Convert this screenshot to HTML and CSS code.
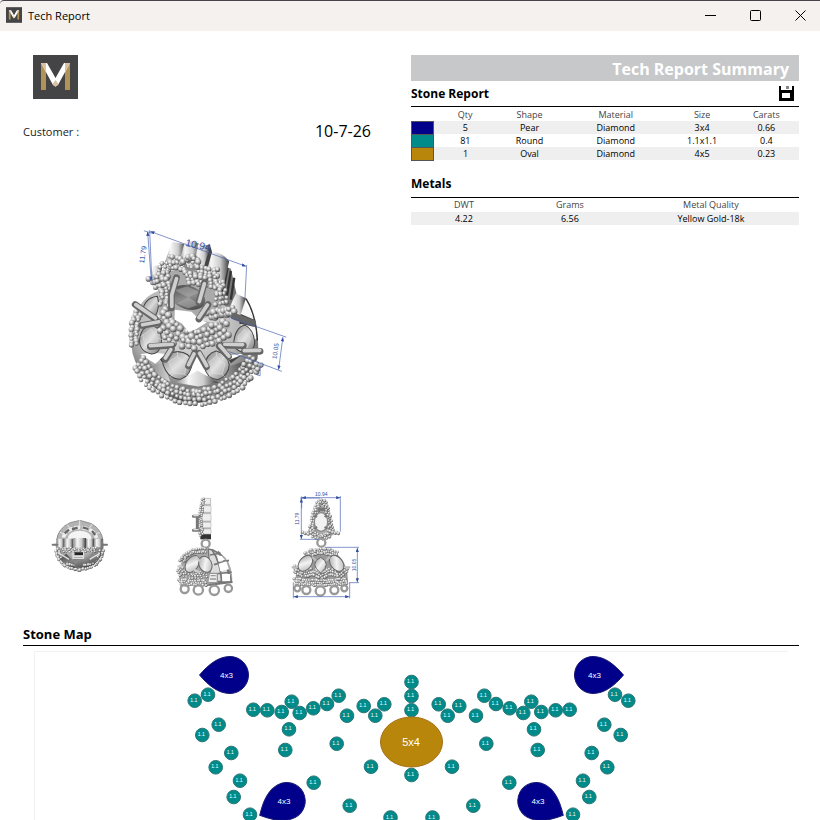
FILE: index.html
```html
<!DOCTYPE html>
<html lang="en">
<head>
<meta charset="utf-8">
<title>Tech Report</title>
<link rel="stylesheet" href="styles.css">
</head>
<body>
<svg class="defs" width="0" height="0" aria-hidden="true">
  <defs>
    <radialGradient id="bead" cx=".38" cy=".32" r=".7"><stop offset="0" stop-color="#fff"/><stop offset=".4" stop-color="#c8c8c8"/><stop offset="1" stop-color="#444"/></radialGradient>
    <radialGradient id="dome" cx=".45" cy=".3" r=".7"><stop offset="0" stop-color="#eee"/><stop offset=".6" stop-color="#b4b4b4"/><stop offset="1" stop-color="#4a4a4a"/></radialGradient>
    <linearGradient id="tube"><stop offset="0" stop-color="#8a8a8a"/><stop offset=".3" stop-color="#f6f6f6"/><stop offset=".65" stop-color="#cdcdcd"/><stop offset="1" stop-color="#3c3c3c"/></linearGradient>
    <linearGradient id="gem" x1="0" y1="0" x2="1" y2="1"><stop offset="0" stop-color="#7c7c7c"/><stop offset=".5" stop-color="#dadada"/><stop offset="1" stop-color="#777"/></linearGradient>
    <linearGradient id="softgem" x1="0" y1="0" x2="1" y2="1"><stop offset="0" stop-color="#999"/><stop offset=".5" stop-color="#f4f4f4"/><stop offset="1" stop-color="#aaa"/></linearGradient>
    <linearGradient id="darkgem" x1="0" y1="0" x2="1" y2="1"><stop offset="0" stop-color="#3d3d3d"/><stop offset=".5" stop-color="#8b8b8b"/><stop offset="1" stop-color="#333"/></linearGradient>
    <marker id="arrow" viewBox="0 0 10 8" refX="10" refY="4" markerWidth="14" markerHeight="10" markerUnits="userSpaceOnUse" orient="auto-start-reverse"><path d="M0 0L10 4L0 8Z" fill="#2f4da3"/></marker>
    <symbol id="logo" viewBox="0 0 45 44">
      <rect width="45" height="44" fill="#444446"/>
      <path d="M8 9h5v26H8zM32 9h5v26h-5z" fill="#b29354"/>
      <path d="M8 8h6l8.500 15L31 8h6L25 30q-2.500 2-5 0Z" fill="#fff"/>
      <path d="M8 8h5v9ZM37 8h-5v9ZM22.500 25l3 4-3 3-3-3Z" fill="#d8c1a5"/>
    </symbol>
  </defs>
</svg>

<header class="titlebar">
  <svg class="titlebar-logo" aria-hidden="true"><use href="#logo"/></svg>
  <span class="titlebar-name">Tech Report</span>
  <button class="window-button" aria-label="Minimize"><svg width="11" height="11"><path d="M0 5.500h11"/></svg></button>
  <button class="window-button" aria-label="Maximize"><svg width="11" height="11"><rect x=".5" y=".5" width="10" height="10" rx="1"/></svg></button>
  <button class="window-button" aria-label="Close"><svg width="11" height="11"><path d="M.5 .5l10 10M10.500 .5l-10 10"/></svg></button>
</header>

<main class="report">
  <div class="columns">
    <section class="overview">
      <svg class="brand" role="img" aria-label="M"><use href="#logo"/></svg>
      <div class="customer"><span>Customer :</span><time class="date">10-7-26</time></div>

      <svg class="render-main" viewBox="0 0 570 600" role="img" aria-label="Perspective view">
        <path d="M85 265q-30 60-18 135 25 90 110 130 75 35 150 2 80-35 112-115 10-70-20-135-30-55-65-72H160q-50 10-75 55Z" fill="url(#dome)"/>
        <path d="M385 235q50 45 52 120l-28 20-35-110Z" fill="#f6f6f6"/>
        <path d="M405 237q30 48 34 125" fill="none" stroke="#333" stroke-width="4"/>
        <path d="M388 282l42 18 5 22-50-10ZM140 405l60-8-45 30ZM345 405l55-5-40 30Z" fill="#444"/>
        <path d="M90 403q45-8 75 0l-30 28ZM350 405l55-5-50 20ZM215 455l48-60 35 72-60 2Z" fill="#fff"/>
        <path d="M110 415l45 60 70 30 80-5 75-35 25-50-15 80-60 42h-110l-85-45Z" fill="#8d8d8d"/>
        <path d="M120 440q18-12 38-10l22 55q-35-12-60-45ZM352 440l58-20q-20 45-65 60Z" fill="url(#tube)"/>
        <path d="M195 487l66-35 62 35-60 12Z" fill="url(#tube)"/>
        <g class="beads" data-path="84,275 72,320 72,380" data-count="24" data-spread="7" data-size="8"></g>
        <g class="beads" data-path="85,425 115,475 165,510 215,528 262,533 320,522 375,488 415,450 435,415" data-count="130" data-spread="20" data-size="8"></g>
        <g class="gem">
          <path d="M97 280q2-45 44-50 10 30-8 65Z"/>
          <path d="M88 360q5-40 34-44 34 8 31 54-5 32-30 32-36-8-35-42Z"/>
          <path d="M368 375q3-52 34-59 25 12 29 50 0 25-26 33-26-3-37-24Z"/>
          <path d="M157 430q5-30 45-35 35 2 43 30-3 40-34 52-39 1-54-47Z"/>
          <path d="M281 440q5-40 35-47 33 8 39 40 0 31-34 46-33-4-40-39Z"/>
        </g>
        <path class="facets" d="M98 345l25-18 21 28-9 30-31-3ZM381 350l20-22 18 29-12 28-24-4ZM174 425l27-17 30 22-9 32-34-2ZM294 427l23-19 26 23-9 31-31-2ZM98 345l-9 8M144 355l10 4M201 408v-13M188 460l-8 10M222 462l8 7M317 408v-13M303 460l-8 10M334 462l7 8"/>
        <path d="M338 140l22 8 18 80 26 10-30 45-45-35Z" fill="#777"/>
        <path d="M350 145l-15 80M360 155l-12 75M370 175l-10 65" stroke="#333" stroke-width="7"/>
        <path d="M375 222l30 14-18 55-40-8Z" fill="url(#tube)"/>
        <g fill="url(#tube)">
          <path d="M185 68l40 7-15 70-49-10Z"/><path d="M222 70q30-10 47 8l-14 72-51-12Z"/><path d="M262 75l36 3-20 82-31-8Z"/><path d="M300 98q35 0 55 28l-15 64-62-25Z"/><path d="M130 140l25-3-5 62-30-12Z"/>
        </g>
        <path d="M278 150l20-72 6 20-14 50Z" fill="#444"/>
        <path d="M150 160l80-15 90 25 15 110-75 20 100 20-70 60-100-15-45-50Z" fill="#aaa"/>
        <g class="beads" data-path="148,282 170,325 210,355 260,362 310,345 352,320" data-count="62" data-spread="24" data-size="10"></g>
        <path d="M193 270l50 6 20 20 25 12-32 20-22 8-20-25-22-12Z" fill="#fff"/>
        <ellipse cx="232" cy="234" rx="53" ry="35" fill="url(#darkgem)" transform="rotate(18 232 234)"/>
        <path d="M192 212l38-12 38 18-35 15ZM233 233l-35 18 35 15 35-12Z" fill="#bbb" opacity=".45"/>
        <g class="beads" data-path="122,193 152,182 172,125 205,133 240,145 265,158 325,168" data-count="65" data-spread="14" data-size="8"></g>
        <g class="beads" data-path="158,160 155,185 170,215 165,262" data-count="34" data-spread="14" data-size="8"></g>
        <g class="beads" data-path="225,175 270,180 320,190 333,220 330,260" data-count="48" data-spread="15" data-size="8"></g>
        <g class="beads" data-path="295,288 375,270" data-count="18" data-spread="8" data-size="10"></g>
        <circle cx="243" cy="130" r="21" fill="none" stroke="#888" stroke-width="8"/>
        <g class="beads" data-path="222,130 230,115 250,112 264,130 255,147" data-count="9" data-spread="2" data-size="9"></g>
        <g class="prongs">
          <path d="M198 175L183 225V265M281 190L265 248M292 255L265 298M75 255L135 297M95 317L145 308M120 380L185 376M183 388L165 418M252 400L234 438M265 400L287 440M325 378L353 410M342 376L397 377M400 395L447 394M370 290L425 310"/>
        </g>
        <g class="prong-light"><path d="M198 178L184 226V260M281 193L266 246M290 256L265 293M77 255L135 295M97 315L145 306M120 377L185 373M181 389L165 414M250 402L234 434M267 400L288 437M327 377L354 408M342 373L395 374M400 392L446 391"/></g>
        <g class="dimension">
          <path class="arrows" d="M120 37L405 141"/><path class="arrows" d="M112 38L123 184"/><path class="arrows" d="M515 352L502 449"/>
          <path d="M101 35L127 43M118 33L125 190M407 137L402 236M355 292L525 352M355 395L512 454M447 430V467L435 463"/>
          <text x="262" y="88" font-size="30" transform="rotate(12 262 80)">10.94</text>
          <text x="98" y="113" font-size="21" transform="rotate(-82 98 106)">11.79</text>
          <text x="492" y="400" font-size="19" transform="rotate(-82 492 393)">10.05</text>
        </g>
      </svg>

      <div class="views">
        <svg viewBox="-21 24 348 342" role="img" aria-label="Top view">
          <circle cx="149" cy="195" r="72" fill="url(#dome)"/>
          <path d="M80 180q4-35 40-52l30-7 35 10q30 18 34 50" fill="#b4b4b4" stroke="#777" stroke-width="2"/>
          <path d="M100 173q6-28 49-31 42 3 51 32" fill="none" stroke="#eee" stroke-width="11" stroke-dasharray="18 5"/>
          <path d="M104 160l13-11M126 148l17-5M158 142l17 5M186 153l10 12" stroke="#666" stroke-width="7"/>
          <path d="M149 121v18M112 134l9 13M186 133l-9 13M90 157l12 5M209 157l-12 5" stroke="#e8e8e8" stroke-width="3"/>
          <ellipse cx="149" cy="174" rx="35" ry="22" fill="#f4f4f4"/>
          <path d="M81 176h22v25H83z" fill="url(#tube)"/><path d="M103 176h27v28h-27z" fill="url(#tube)"/><path d="M130 174h38v31h-38z" fill="url(#tube)"/><path d="M168 176h24v28h-24z" fill="url(#tube)"/><path d="M192 176h26l-4 26h-22z" fill="url(#tube)"/>
          <path d="M68 194h14M216 194h15" stroke="#777" stroke-width="6" stroke-linecap="round"/>
          <g class="beads" data-path="80,210 90,235 110,256 149,265 190,256 210,233 217,208" data-count="60" data-spread="5" data-size="5"></g>
          <g class="beads" data-path="95,210 202,210" data-count="34" data-spread="5" data-size="4"></g>
          <path d="M89 238l20-17 17 18-20 12ZM130 236h31l-5 26h-22ZM168 239l19-19 20 16-18 13Z" fill="url(#darkgem)"/>
          <path d="M88 220l29 18M209 220l-30 18M129 213v22h31v-22M127 229h36" stroke="#ddd" stroke-width="4" fill="none"/>
          <path d="M134 217h25v8h-25z" fill="#222"/><circle cx="149" cy="270" r="6" fill="url(#bead)"/>
        </svg>
        <svg viewBox="327 24 348 342" role="img" aria-label="Side view">
          <path d="M513 55h30v117l-30 5Z" fill="#aaa"/><path d="M520 55h22v18h-22zM517 77h26v20h-26zM514 101h29v22h-29zM518 127h25v16h-25zM518 147h25v15h-25z" fill="#eee" stroke="#bbb" stroke-width="2"/>
          <path d="M511 163h32v15h-32z" fill="#333"/>
          <g class="beads" data-path="519,57 514,92 511,120 514,170" data-count="36" data-spread="3" data-size="4"></g>
          <path d="M490 109h18M490 151h18M502 112v38" stroke="#777" stroke-width="9" stroke-linecap="round"/><path d="M490 107h16M490 149h16" stroke="#ddd" stroke-width="4"/>
          <circle cx="527" cy="191" r="12" fill="none" stroke="#999" stroke-width="7"/>
          <path d="M447 300q-8-85 78-96 83 9 82 102l-80 13Z" fill="#a8a8a8"/>
          <path d="M535 207q52 7 70 100h-63Z" fill="#ddd" stroke="#777" stroke-width="4"/>
          <path d="M540 225l32-6M552 254l45-13M555 282l50-6M552 305h52M545 208q28 40 30 101M564 214q31 35 35 92" fill="none" stroke="#777" stroke-width="5"/>
          <path d="M566 251l23-7 8 24-26 6ZM576 282h24v22h-23ZM562 226l14 2 9 12-20 4Z" fill="#fff"/>
          <g class="beads" data-path="456,245 468,225 490,213 530,210" data-count="30" data-spread="5" data-size="5"></g>
          <g class="beads" data-path="446,262 460,285 505,286 535,280" data-count="50" data-spread="10" data-size="4"></g>
          <g class="beads" data-path="448,306 530,310" data-count="36" data-spread="6" data-size="5"></g>
          <ellipse cx="487" cy="252" rx="18" ry="28" transform="rotate(35 487 252)" fill="url(#softgem)" stroke="#666" stroke-width="3"/><ellipse cx="526" cy="253" rx="19" ry="25" transform="rotate(-25 526 253)" fill="url(#softgem)" stroke="#666" stroke-width="3"/>
          <path d="M445 259h12M500 232l8 10M494 270l12 6" stroke="#ccc" stroke-width="7" stroke-linecap="round"/>
          <path d="M538 280h24v28h-29ZM542 287h15M540 297h18" fill="#eee" stroke="#999" stroke-width="4"/><path d="M535 315l72-9" stroke="#777" stroke-width="6"/>
          <g class="loops"><circle cx="464" cy="327" r="12"/><circle cx="505" cy="330" r="14"/><circle cx="553" cy="331" r="14"/><circle cx="595" cy="325" r="11"/></g>
        </svg>
        <svg viewBox="-75 24 348 342" role="img" aria-label="Front view">
          <path d="M110 78h30l25 82-18 14h-44l-20-18Z" fill="#aaa"/>
          <g class="beads" data-path="124,60 112,78 102,115 96,145 100,165 124,172 148,165 153,145 144,115 136,78 124,60" data-count="100" data-spread="6" data-size="5"></g>
          <g class="beads" data-path="70,160 88,160" data-count="4" data-spread="2" data-size="5"></g><g class="beads" data-path="160,160 178,158" data-count="4" data-spread="2" data-size="5"></g>
          <path d="M113 83h22v10h-22Z" fill="#777"/>
          <ellipse cx="123" cy="126" rx="20" ry="28" fill="#f2f2f2" stroke="#888" stroke-width="4"/><path d="M104 105l7 6M141 105l-7 6M104 146l7-6M141 146l-7-6" stroke="#777" stroke-width="6"/>
          <circle cx="124" cy="188" r="12" fill="none" stroke="#999" stroke-width="7"/>
          <path d="M46 302q4-88 78-96 77 8 80 96l-80 12Z" fill="#999"/>
          <g class="beads" data-path="80,226 100,216 124,213 150,216 172,226" data-count="44" data-spread="7" data-size="5"></g>
          <g class="beads" data-path="42,266 75,283 98,274 124,288 151,274 177,283 203,266" data-count="80" data-spread="8" data-size="5"></g>
          <g class="beads" data-path="44,304 124,310 203,304" data-count="78" data-spread="7" data-size="5"></g>
          <ellipse cx="76" cy="250" rx="18" ry="27" transform="rotate(38 76 250)" fill="url(#softgem)" stroke="#666" stroke-width="3"/><path d="M122 232q-36 19 0 47 34-28 0-47Z" fill="url(#softgem)" stroke="#666" stroke-width="3"/><ellipse cx="170" cy="250" rx="18" ry="27" transform="rotate(-38 170 250)" fill="url(#softgem)" stroke="#666" stroke-width="3"/>
          <path d="M38 262h9M199 262h9M98 232l8 8M148 232l-8 8" stroke="#bbb" stroke-width="7" stroke-linecap="round"/>
          <g class="loops"><circle cx="52" cy="325" r="9"/><circle cx="79" cy="330" r="12"/><circle cx="121" cy="333" r="14"/><circle cx="163" cy="330" r="12"/><circle cx="193" cy="325" r="9"/></g>
          <g class="dimension">
            <path class="arrows" d="M65 53H181"/><path class="arrows" d="M64 55V177"/><path class="arrows" d="M232 204V307"/><path class="arrows" d="M41 350H208"/>
            <path d="M65 49V85M181 48V155M60 54H120M60 178H115M135 202H237M208 308H237M40 307V355M209 307V355"/>
            <text x="124" y="49" font-size="15">10.94</text><text x="53" y="121" font-size="15" transform="rotate(-90 53 116)">11.79</text><text x="222" y="260" font-size="15" transform="rotate(-90 222 255)">10.05</text>
          </g>
        </svg>
      </div>
    </section>

    <section class="summary">
      <h1 class="banner">Tech Report Summary</h1>
      <div class="section-head">
        <h2>Stone Report</h2>
        <button class="save" aria-label="Save"><svg width="15" height="15" viewBox="0 0 15 15"><path d="M0 0h2v4h11V0h2v15H0ZM3 7v5h8V7Z" fill-rule="evenodd"/><path d="M7 0h3v3H7z" fill="#888"/></svg></button>
      </div>
      <table class="stones">
        <colgroup><col class="c-swatch"><col class="c-qty"><col class="c-shape"><col class="c-material"><col class="c-size"><col class="c-carats"></colgroup>
        <thead><tr><td></td><th>Qty</th><th>Shape</th><th>Material</th><th>Size</th><th>Carats</th></tr></thead>
        <tbody>
          <tr><td class="swatch navy"></td><td>5</td><td>Pear</td><td>Diamond</td><td>3x4</td><td>0.66</td></tr>
          <tr><td class="swatch teal"></td><td>81</td><td>Round</td><td>Diamond</td><td>1.1x1.1</td><td>0.4</td></tr>
          <tr><td class="swatch gold"></td><td>1</td><td>Oval</td><td>Diamond</td><td>4x5</td><td>0.23</td></tr>
        </tbody>
      </table>
      <div class="section-head metals-head"><h2>Metals</h2></div>
      <table class="metals">
        <colgroup><col class="c-dwt"><col class="c-grams"><col></colgroup>
        <thead><tr><th>DWT</th><th>Grams</th><th>Metal Quality</th></tr></thead>
        <tbody><tr><td>4.22</td><td>6.56</td><td>Yellow Gold-18k</td></tr></tbody>
      </table>
    </section>
  </div>

  <section class="map-section">
    <h2 class="map-title">Stone Map</h2>
    <div class="map-frame"><svg id="stone-map" viewBox="35 652 753 168" role="img" aria-label="Stone map"></svg></div>
  </section>
</main>
<script src="script.js"></script>
</body>
</html>
```
FILE: styles.css
```css
* { box-sizing: border-box; }
body {
  margin: 0;
  height: 100vh;
  overflow: hidden;
  display: flex;
  flex-direction: column;
  background: #fff;
  color: #000;
  font-family: "Open Sans", "Noto Sans", sans-serif;
}
button { border: 0; padding: 0; background: none; }
h1, h2 { margin: 0; }
svg { display: block; }
.defs { position: absolute; }

.titlebar {
  flex: none;
  display: flex;
  align-items: center;
  height: 31px;
  padding-left: 6px;
  border-top: 1px solid #48444a;
  border-radius: 4px 0 0 0;
  background: #f5f1ef;
}
.titlebar-logo { width: 16px; height: 16px; margin-bottom: 2px; }
.titlebar-name { flex: 1; margin: 0 0 2px 6px; font-size: 11px; }
.window-button { width: 45px; height: 28px; margin-bottom: 2px; display: grid; place-items: center; }
.window-button:last-child { width: 42px; padding-left: 3px; }
.window-button svg { fill: none; stroke: #000; }

.report { flex: 1; min-height: 0; padding: 24px 21px 0 23px; overflow: hidden; }
.columns { display: grid; grid-template-columns: 1fr 1fr; }

.overview { padding-right: 40px; }
.brand { width: 45px; height: 44px; margin-left: 10px; }
.customer { display: flex; justify-content: space-between; align-items: center; height: 24px; margin-top: 20px; font-size: 11px; color: #222; }
.date { font-size: 16px; color: #000; }
.render-main { width: 55%; margin: 76px 0 68px 25%; }
.views { display: grid; grid-template-columns: repeat(3, 1fr); }
.gem { fill: url(#gem); stroke: #444; stroke-width: 3; }
.facets { fill: #fff; fill-opacity: .2; stroke: #ddd; stroke-width: 2; }
.prongs { fill: none; stroke: #666; stroke-width: 20; stroke-linecap: round; }
.prong-light { fill: none; stroke: #cfcfcf; stroke-width: 11; stroke-linecap: round; }
.loops { fill: none; stroke: #999; stroke-width: 7; }
.dimension { fill: none; stroke: #4761b0; stroke-width: 2; }
.dimension text { fill: #2f4da3; stroke: none; text-anchor: middle; font-family: "Liberation Sans", sans-serif; }
.arrows { marker-start: url(#arrow); marker-end: url(#arrow); }

.banner { height: 26px; padding-right: 10px; background: #c7c8ca; color: #fff; font-size: 16px; line-height: 28px; text-align: right; }
.section-head { display: flex; justify-content: space-between; align-items: center; height: 26px; padding-right: 5px; border-bottom: 1px solid #000; }
h2 { font-size: 12px; line-height: 16px; }
.save { width: 15px; height: 15px; }

table { width: 100%; table-layout: fixed; border-collapse: collapse; font-size: 9px; line-height: 13px; text-align: center; }
th, td { height: 13px; padding: 0; }
th { font-weight: 400; color: #444; }
thead th { height: 14px; }
tbody tr:nth-child(odd) { background: #efefef; }
.c-swatch { width: 5.6%; }
.c-qty, .c-shape, .c-carats { width: 16.6%; }
.c-material { width: 28%; }
.c-size { width: 16.6%; }
.c-dwt, .c-grams { width: 27.3%; }
.swatch { border: 1px solid #555; }
.navy { background: #00008b; }
.teal { background: #008b8b; }
.gold { background: #b8860b; }
.metals-head { height: 26px; margin-top: 11px; }

.map-title { padding-bottom: 3px; border-bottom: 1px solid #000; font-size: 13px; }
.map-section { margin-top: 24px; }
.map-frame { margin: 5px 11px 0; border: 1px solid #f1f1f1; border-width: 1px 0 0 1px; }
.map-frame svg { width: 100%; }
.round { fill: #008b8b; stroke: #2b7474; }
.pear { fill: #00008b; stroke: #171773; }
.oval { fill: #b8860b; stroke: #a66f12; }
#stone-map text { fill: #fff; text-anchor: middle; font-family: "Liberation Sans", sans-serif; }
.label-round { font-size: 5px; }
.label-pear { font-size: 8px; }
.label-oval { font-size: 11px; }
```
FILE: script.js
```js
const NS = "http://www.w3.org/2000/svg";

function add(parent, name, attrs, text) {
  const el = document.createElementNS(NS, name);
  for (const key in attrs) el.setAttribute(key, attrs[key]);
  if (text) el.textContent = text;
  parent.appendChild(el);
  return el;
}

// Beads are set in rows along a polyline, with a small repeatable jitter.
document.querySelectorAll(".beads").forEach((group) => {
  let seed = 17;
  const random = () => (seed = (seed * 16807) % 2147483647) / 2147483647;
  const points = group.dataset.path.split(" ").map((p) => p.split(",").map(Number));
  const count = Number(group.dataset.count);
  const spread = Number(group.dataset.spread);
  const size = Number(group.dataset.size);
  const rows = Math.max(2, Math.round((2 * spread) / (size * 1.5)) + 1);
  const lengths = points.slice(1).map(([x, y], k) => Math.hypot(x - points[k][0], y - points[k][1]));
  const total = lengths.reduce((sum, length) => sum + length, 0);
  for (let i = 0; i < count; i++) {
    let left = (i / count) * total;
    let k = 0;
    while (left > lengths[k] && k < lengths.length - 1) left -= lengths[k++];
    const [ax, ay] = points[k];
    const [bx, by] = points[k + 1];
    const ux = (bx - ax) / lengths[k];
    const uy = (by - ay) / lengths[k];
    const offset = ((i % rows) / (rows - 1) * 2 - 1) * spread;
    const jitter = () => (random() - 0.5) * size * 0.7;
    const x = ax + ux * left - uy * offset + jitter();
    const y = ay + uy * left + ux * offset + jitter();
    add(group, "circle", { cx: x, cy: y, r: size * (0.75 + random() * 0.35), fill: "url(#bead)" });
  }
});

// Stones on the left half; the right half mirrors them about the centre line.
const CENTRE = 411.5;
const rounds = [
  [194.7, 700.7], [208, 694.7], [218.7, 724.7], [202.3, 735], [231.3, 753], [215.7, 767.3],
  [240, 780.7], [233.7, 797], [250, 814.7], [253.3, 709.7], [267.3, 710.3], [281.7, 712],
  [291.7, 701.7], [299.7, 713], [313.3, 708.3], [327, 704], [338.7, 695.7], [347, 715.7],
  [363.7, 706], [375.3, 715.7], [384.3, 704.3], [289, 729.3], [285.3, 750], [336.7, 743.7],
  [371, 766.7], [313.7, 782.7], [349.7, 805.7], [390.5, 817.5]
];
const middle = [[CENTRE, 682], [CENTRE, 696], [CENTRE, 710.3], [CENTRE, 775]];
const map = document.getElementById("stone-map");
const mirrored = rounds.map(([x, y]) => [2 * CENTRE - x, y]);

[...rounds, ...mirrored, ...middle].forEach(([x, y]) => {
  add(map, "circle", { class: "round", cx: x, cy: y, r: 6.8 });
  add(map, "text", { class: "label-round", x: x - 1, y: y + 1 }, "1.1");
});

const pears = [[230, 675, 0, 226.5], [593, 675, 180, 594.5], [286.7, 801, -28, 284], [536.3, 801, 208, 538]];
pears.forEach(([x, y, angle, labelX]) => {
  add(map, "path", {
    class: "pear",
    d: "M-30.500 0C-22-10-12-18.500 0-18.500A18.500 18.500 0 0 1 0 18.500C-12 18.500-22 10-30.500 0Z",
    transform: `translate(${x} ${y}) rotate(${angle})`
  });
  add(map, "text", { class: "label-pear", x: labelX, y: y + 2.500 }, "4x3");
});

add(map, "ellipse", { class: "oval", cx: CENTRE, cy: 742, rx: 31, ry: 25 });
add(map, "text", { class: "label-oval", x: CENTRE - 0.5, y: 746 }, "5x4");
```
